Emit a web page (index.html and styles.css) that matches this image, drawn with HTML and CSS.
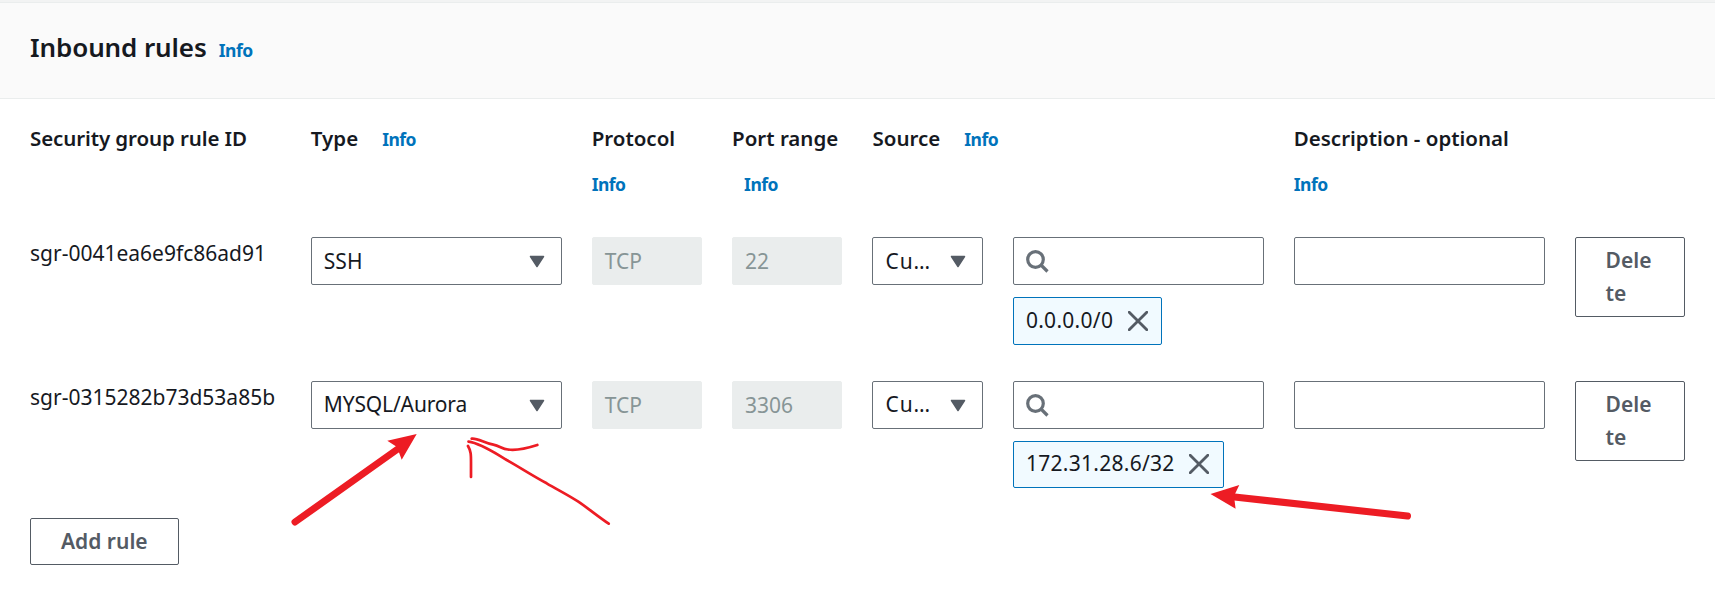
FILE: index.html
```html
<!DOCTYPE html>
<html lang="en">
<head>
<meta charset="utf-8">
<title>Inbound rules</title>
<link rel="stylesheet" href="styles.css">
</head>
<body>
<main class="panel">
  <header class="panel-header">
    <h2 class="title">Inbound rules</h2>
    <a class="info">Info</a>
  </header>
  <section class="panel-body">
    <div class="grid head-row">
      <div class="span2 head"><span class="label label-id">Security group rule ID</span></div>
      <div class="span2 head"><span class="label">Type</span><a class="info gap-wide">Info</a></div>
      <div class="head stacked"><span class="label">Protocol</span><a class="info">Info</a></div>
      <div class="head stacked"><span class="label">Port range</span><a class="info indent">Info</a></div>
      <div class="span3 head"><span class="label">Source</span><a class="info gap-wide">Info</a></div>
      <div class="span2 head stacked"><span class="label">Description - optional</span><a class="info">Info</a></div>
    </div>
    <div class="grid rule">
      <div class="span2 rule-id"><span>sgr-0041ea6e9fc86ad91</span></div>
      <div class="span2 field select"><span>SSH</span><svg class="caret" viewBox="0 0 16 13"><path d="M1.5 1.5h13L8 11.5z"/></svg></div>
      <div class="field disabled"><span>TCP</span></div>
      <div class="field disabled"><span>22</span></div>
      <div class="field select"><span class="clipped">Cu…</span><svg class="caret" viewBox="0 0 16 13"><path d="M1.5 1.5h13L8 11.5z"/></svg></div>
      <div class="span2 source">
        <div class="field"><svg class="search" viewBox="0 0 23 23"><circle cx="9.5" cy="9.5" r="7.8"/><path d="M15 15l6.5 6.5"/></svg></div>
        <div class="token"><span>0.0.0.0/0</span><svg class="close" viewBox="0 0 20 20"><path d="M1.2 1.2l17.6 17.6M18.8 1.2L1.2 18.8"/></svg></div>
      </div>
      <div class="span2 field"></div>
      <button class="button delete">Delete</button>
    </div>
    <div class="grid rule">
      <div class="span2 rule-id"><span>sgr-0315282b73d53a85b</span></div>
      <div class="span2 field select raised"><span class="value-long">MYSQL/Aurora</span><svg class="caret" viewBox="0 0 16 13"><path d="M1.5 1.5h13L8 11.5z"/></svg></div>
      <div class="field disabled"><span>TCP</span></div>
      <div class="field disabled"><span>3306</span></div>
      <div class="field select raised"><span class="clipped">Cu…</span><svg class="caret" viewBox="0 0 16 13"><path d="M1.5 1.5h13L8 11.5z"/></svg></div>
      <div class="span2 source">
        <div class="field"><svg class="search" viewBox="0 0 23 23"><circle cx="9.5" cy="9.5" r="7.8"/><path d="M15 15l6.5 6.5"/></svg></div>
        <div class="token token-last"><span>172.31.28.6/32</span><svg class="close" viewBox="0 0 20 20"><path d="M1.2 1.2l17.6 17.6M18.8 1.2L1.2 18.8"/></svg></div>
      </div>
      <div class="span2 field"></div>
      <button class="button delete">Delete</button>
    </div>
    <button class="button add">Add rule</button>
  </section>
  <svg class="annotations" viewBox="0 0 1715 594">
    <path class="shaft" d="M295 522L402 446M1407.5 516L1230 496.5"/>
    <path class="tip" d="M416.7 434L387.3 440.7L397 447L401.7 459.7zM1210.5 494L1239.3 485L1234 496L1235.6 508.7z"/>
    <path class="pen" d="M468.5 441.7C480 443 495 453 506.7 460C520 467.5 533 476 546.7 483.3C557 489.5 568 495 578.3 501.7C589 509 598 516.5 608.7 523.7M471.7 438.7C478 438 484 443 493.3 444.7C500 446 502 449 508 449.5C518 451 528 448 537.3 445M468 446C471 451 471 455 471 462V477"/>
  </svg>
</main>
</body>
</html>
```
FILE: styles.css
```css
* { box-sizing: border-box; }

body {
  margin: 0;
  background: #fff;
  color: #16191f;
  font-family: "Noto Sans", "Open Sans", sans-serif;
  font-size: 21px;
  line-height: 33px;
}

.panel {
  position: relative;
  height: 594px;
  overflow: hidden;
  border-top: 2px solid #f2f3f3;
}

.panel-header {
  display: flex;
  align-items: baseline;
  gap: 12px;
  height: 97px;
  padding: 26px 30px 0;
  background: #fafafa;
  border-top: 1px solid #eaeded;
  border-bottom: 1px solid #eaeded;
}

.title {
  margin: 0;
  font-size: 26px;
  font-weight: 600;
  line-height: 36px;
  letter-spacing: -0.1px;
}

.info {
  color: #0073bb;
  font-size: 17.5px;
  font-weight: 700;
  letter-spacing: -0.5px;
}

.panel-body { padding: 23px 30px 0; }

.grid {
  display: grid;
  grid-template-columns: repeat(12, minmax(0, 1fr));
  column-gap: 30px;
  align-items: start;
}

.span2 { grid-column: span 2; }
.span3 { grid-column: span 3; }

.head-row { height: 115px; }
.head { display: flex; align-items: baseline; white-space: nowrap; }
.stacked { flex-direction: column; align-items: flex-start; gap: 13px; }
.label { font-size: 20.5px; font-weight: 600; }
.label-id { letter-spacing: -0.1px; }
.gap-wide { margin-left: 24px; }
.indent { margin-left: 12px; }

.rule { height: 144px; }
.rule-id { white-space: nowrap; }

.field {
  display: flex;
  align-items: center;
  height: 48px;
  padding: 0 12px;
  border: 1px solid #687078;
  border-radius: 2px;
  white-space: nowrap;
}

.select { justify-content: space-between; padding-right: 16px; }
.raised span { margin-bottom: 2px; }
.clipped { letter-spacing: 0.9px; }
.value-long { letter-spacing: -0.15px; }
.disabled { color: #879596; background: #eaeded; border-color: #eaeded; }

.caret { width: 16px; height: 13px; fill: #545b64; stroke: #545b64; stroke-width: 1.5; stroke-linejoin: round; }
.search { width: 23px; height: 23px; fill: none; stroke: #687078; stroke-width: 3.2; }
.close { width: 20px; height: 20px; fill: none; stroke: #545b64; stroke-width: 2.8; stroke-linecap: round; }

.source { display: flex; flex-direction: column; align-items: flex-start; gap: 12px; }
.source .field { width: 100%; }

.token {
  display: flex;
  align-items: center;
  gap: 14.5px;
  height: 48px;
  padding: 0 13.5px 1px 12px;
  border: 1px solid #0073bb;
  border-radius: 2px;
  background: #f1faff;
  letter-spacing: 0.28px;
}
.token span { margin-bottom: 1px; }
.token-last { height: 47px; }

.button {
  border: 1px solid #545b64;
  border-radius: 2px;
  background: #fff;
  color: #545b64;
  font: inherit;
  font-weight: 600;
  text-align: left;
}

.delete { height: 80px; padding: 0 30px; word-break: break-all; }
.add { display: block; height: 47px; margin-top: -7px; padding: 0 30px 1px; }

.annotations {
  position: absolute;
  top: -2px;
  left: 0;
  width: 1715px;
  height: 594px;
  fill: none;
  stroke: #ed1c24;
  stroke-linecap: round;
  stroke-linejoin: round;
}
.shaft { stroke-width: 7; }
.tip { fill: #ed1c24; stroke: none; }
.pen { stroke-width: 2.7; }
```
